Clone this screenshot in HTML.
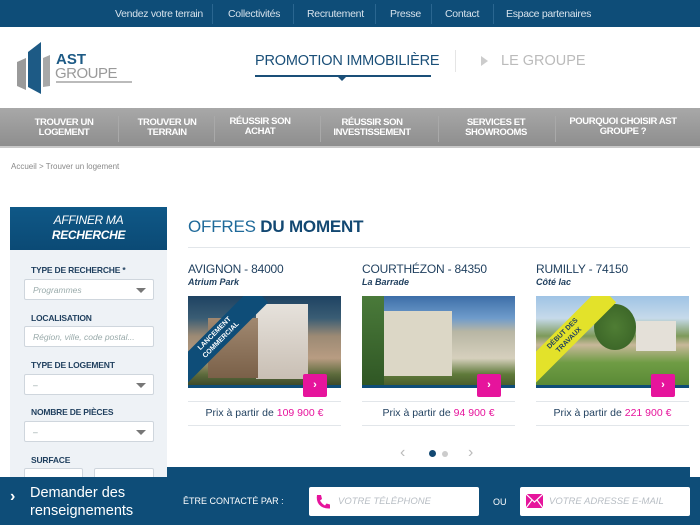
<!DOCTYPE html>
<html><head><meta charset="utf-8"><style>
*{margin:0;padding:0;box-sizing:border-box}
body{width:700px;height:525px;overflow:hidden;font-family:"Liberation Sans",sans-serif;background:#fff;position:relative}
.a{position:absolute}
.top{left:0;top:0;width:700px;height:27px;background:#0e4d78;color:#d6e2ec;font-size:10.5px;letter-spacing:-.3px}
.top span{position:absolute;top:8px}
.top i{position:absolute;top:4px;width:1px;height:20px;background:#2a6690}
.nav{left:0;top:108px;width:700px;height:40px;background:linear-gradient(#a8a8a8,#8e8e8e);border-bottom:2px solid #c9c9c9}
.nav div{position:absolute;top:10px;color:#fff;font-size:9.5px;font-weight:bold;text-align:center;line-height:10px;letter-spacing:-.4px}
.nav i{position:absolute;top:8px;width:1px;height:26px;background:#a9a9a9}
.side{left:10px;top:207px;width:157px;height:270px;background:#eef2f6}
.sh{left:10px;top:207px;width:157px;height:43px;background:linear-gradient(#0f5887,#0b4a75);color:#fff;font-style:italic;font-size:12px;text-align:center;line-height:15px;padding-top:6px;letter-spacing:-.3px}
.lab{color:#1f3f5e;font-size:8.5px;font-weight:bold;left:31px;letter-spacing:-.2px}
.inp{left:24px;width:130px;height:21px;background:#fff;border:1px solid #cfd6dd;border-radius:2px;color:#9aa;font-size:8.5px;font-style:italic;padding:5px 8px}
.inp b{position:absolute;right:7px;top:8px;border:5px solid transparent;border-top:5px solid #777;border-bottom:0}
.card .t{font-size:12px;color:#1f3f5e;letter-spacing:-.2px}
.card .s{font-size:9px;color:#1f3f5e;font-style:italic;font-weight:bold;margin-top:1px}
.img{position:absolute;top:34px;left:0;width:153px;height:92px;border-bottom:3px solid #0e4d78;overflow:hidden}
.btn{position:absolute;top:112px;right:14px;width:24px;height:23px;background:#e6149c;color:#fff;font-size:11px;font-weight:bold;text-align:center;line-height:22px;border-radius:2px}
.pr{position:absolute;top:139px;left:0;width:153px;height:25px;border-top:1px solid #e2e6ea;border-bottom:1px solid #e2e6ea;text-align:center;font-size:10.5px;color:#1f3f5e;line-height:23px}
.pr em{font-style:normal;color:#e6149c}
.rib{position:absolute;width:120px;height:22px;left:-30px;top:30px;transform:rotate(-45deg);font-size:7px;font-weight:bold;text-align:center;line-height:9px;padding-top:2px}
.foot{left:0;top:477px;width:700px;height:48px;background:#0e4d78}
</style></head><body>
<div class="a top">
<span style="left:115px">Vendez votre terrain</span><i style="left:212px"></i>
<span style="left:228px">Collectivités</span><i style="left:293px"></i>
<span style="left:307px">Recrutement</span><i style="left:375px"></i>
<span style="left:390px">Presse</span><i style="left:431px"></i>
<span style="left:445px">Contact</span><i style="left:493px"></i>
<span style="left:506px">Espace partenaires</span>
</div>
<svg class="a" style="left:14px;top:38px" width="125" height="60">
<polygon points="3,24 12,20 12,52 3,48" fill="#9a9a9a"/>
<polygon points="14,14 27,4 27,56 14,49" fill="#1d5a85"/>
<polygon points="29,20 36,17 36,48 29,49" fill="#a8a8a8"/>
<text x="42" y="26" font-family="Liberation Sans" font-weight="bold" font-size="15" fill="#1d5a85">AST</text>
<text x="41" y="40" font-family="Liberation Sans" font-size="15" fill="#9a9a9a" letter-spacing="-.5">GROUPE</text>
<rect x="42" y="43" width="76" height="2" fill="#bbb"/>
</svg>
<div class="a" style="left:255px;top:53px;font-size:14.5px;color:#1a4f78;letter-spacing:-.2px">PROMOTION IMMOBILIÈRE</div>
<div class="a" style="left:255px;top:75px;width:176px;height:2px;background:#1a4f78"></div>
<div class="a" style="left:338px;top:77px;border:4px solid transparent;border-top:4px solid #1a4f78;border-bottom:0"></div>
<div class="a" style="left:455px;top:50px;width:1px;height:22px;background:#e5e5e5"></div>
<div class="a" style="left:481px;top:56px;border:5px solid transparent;border-left:7px solid #ccc;border-right:0"></div>
<div class="a" style="left:501px;top:53px;font-size:14.5px;color:#bbb">LE GROUPE</div>
<div class="a nav">
<div style="left:22px;width:84px">TROUVER UN<br>LOGEMENT</div><i style="left:118px"></i>
<div style="left:126px;width:82px">TROUVER UN<br>TERRAIN</div><i style="left:214px"></i>
<div style="left:218px;width:84px;top:9px">RÉUSSIR SON<br>ACHAT</div><i style="left:320px"></i>
<div style="left:323px;width:98px">RÉUSSIR SON<br>INVESTISSEMENT</div><i style="left:438px"></i>
<div style="left:450px;width:92px">SERVICES ET<br>SHOWROOMS</div><i style="left:555px"></i>
<div style="left:560px;width:126px;top:9px">POURQUOI CHOISIR AST<br>GROUPE ?</div>
</div>
<div class="a" style="left:11px;top:162px;font-size:8px;color:#888">Accueil &gt; Trouver un logement</div>
<div class="a side"></div>
<div class="a sh">AFFINER MA<br><b>RECHERCHE</b></div>
<div class="a lab" style="top:265px">TYPE DE RECHERCHE *</div>
<div class="a inp" style="top:279px">Programmes<b></b></div>
<div class="a lab" style="top:313px">LOCALISATION</div>
<div class="a inp" style="top:326px">Région, ville, code postal...</div>
<div class="a lab" style="top:360px">TYPE DE LOGEMENT</div>
<div class="a inp" style="top:374px">–<b></b></div>
<div class="a lab" style="top:407px">NOMBRE DE PIÈCES</div>
<div class="a inp" style="top:421px">–<b></b></div>
<div class="a lab" style="top:455px">SURFACE</div>
<div class="a inp" style="top:468px;width:59px"></div>
<div class="a inp" style="top:468px;left:94px;width:60px"></div>
<div class="a" style="left:188px;top:217px;font-size:17px;color:#1f6a9a;letter-spacing:-.2px">OFFRES <b style="color:#134872">DU MOMENT</b></div>
<div class="a" style="left:188px;top:247px;width:502px;height:1px;background:#e2e6ea"></div>
<div class="a card" style="left:188px;top:262px;width:153px;height:170px">
<div class="t">AVIGNON - 84000</div><div class="s">Atrium Park</div>
<div class="img" style="background:linear-gradient(180deg,#1e4262 0%,#3a5d74 25%,#9c8a74 45%,#b89c82 70%,#5d6b3c 88%,#3c4a2a 100%)">
<div class="a" style="left:68px;top:8px;width:52px;height:75px;background:linear-gradient(#e6e2dc,#c9bfb4)"></div>
<div class="a" style="left:20px;top:22px;width:50px;height:60px;background:linear-gradient(#a08870,#7a6048)"></div>
<div class="rib" style="background:#0e4d78;color:#fff">LANCEMENT<br>COMMERCIAL</div></div>
<div class="btn">›</div>
<div class="pr">Prix à partir de <em>109 900 €</em></div></div>
<div class="a card" style="left:362px;top:262px;width:153px;height:170px">
<div class="t">COURTHÉZON - 84350</div><div class="s">La Barrade</div>
<div class="img" style="background:linear-gradient(180deg,#3d6ea8 0%,#6f9ccb 25%,#b8b6a4 40%,#d6d0bd 70%,#5f7a3a 88%,#4a5e2c 100%)">
<div class="a" style="left:20px;top:15px;width:70px;height:65px;background:#dcd7c6"></div>
<div class="a" style="left:0;top:0;width:22px;height:92px;background:linear-gradient(#4a7a3a,#2f5624)"></div></div>
<div class="btn">›</div>
<div class="pr">Prix à partir de <em>94 900 €</em></div></div>
<div class="a card" style="left:536px;top:262px;width:153px;height:170px">
<div class="t">RUMILLY - 74150</div><div class="s">Côté lac</div>
<div class="img" style="background:linear-gradient(180deg,#9fc3e5 0%,#c6daea 25%,#7d9a5a 45%,#c8b89a 55%,#6f9c44 75%,#5a8a36 100%)">
<div class="a" style="left:100px;top:25px;width:40px;height:30px;background:#e4e0d8"></div>
<div class="a" style="left:58px;top:8px;width:42px;height:46px;background:radial-gradient(#4f7d34,#365f24);border-radius:50%"></div>
<div class="rib" style="background:#e3e22a;color:#1f3f5e">DÉBUT DES<br>TRAVAUX</div></div>
<div class="btn">›</div>
<div class="pr">Prix à partir de <em>221 900 €</em></div></div>
<div class="a" style="left:400px;top:444px;font-size:16px;color:#bbb">‹</div>
<div class="a" style="left:429px;top:450px;width:7px;height:7px;border-radius:50%;background:#134872"></div>
<div class="a" style="left:442px;top:451px;width:6px;height:6px;border-radius:50%;background:#ccc"></div>
<div class="a" style="left:468px;top:444px;font-size:16px;color:#bbb">›</div>
<div class="a" style="left:167px;top:467px;width:523px;height:10px;background:#0e4d78"></div>
<div class="a foot"></div>
<div class="a" style="left:10px;top:488px;color:#fff;font-size:16px;font-weight:bold">›</div>
<div class="a" style="left:30px;top:484px;color:#fff;font-size:14.5px;line-height:18px">Demander des<br>renseignements</div>
<div class="a" style="left:183px;top:496px;color:#fff;font-size:9px">ÊTRE CONTACTÉ PAR :</div>
<div class="a" style="left:309px;top:487px;width:170px;height:29px;background:#fff;border-radius:2px"></div>
<svg class="a" style="left:314px;top:493px" width="18" height="18" viewBox="0 0 18 18"><path d="M3 2 L7 2 L8 6 L6 7.5 Q8 11 11 12.5 L12.5 10.5 L16 11.5 L16 15.5 Q9 16 5 11.5 Q2 7.5 3 2Z" fill="#e6149c"/></svg>
<div class="a" style="left:338px;top:496px;color:#b8bec4;font-size:9.5px;font-style:italic">VOTRE TÉLÉPHONE</div>
<div class="a" style="left:493px;top:497px;color:#fff;font-size:9px">OU</div>
<div class="a" style="left:520px;top:487px;width:170px;height:29px;background:#fff;border-radius:2px"></div>
<svg class="a" style="left:526px;top:494px" width="17" height="14"><rect width="17" height="14" fill="#e6149c"/><path d="M0 0 L8.5 8 L17 0 M0 14 L6 6 M17 14 L11 6" stroke="#fff" stroke-width="1.2" fill="none"/></svg>
<div class="a" style="left:549px;top:496px;color:#b8bec4;font-size:9.5px;font-style:italic">VOTRE ADRESSE E-MAIL</div>
</body></html>
